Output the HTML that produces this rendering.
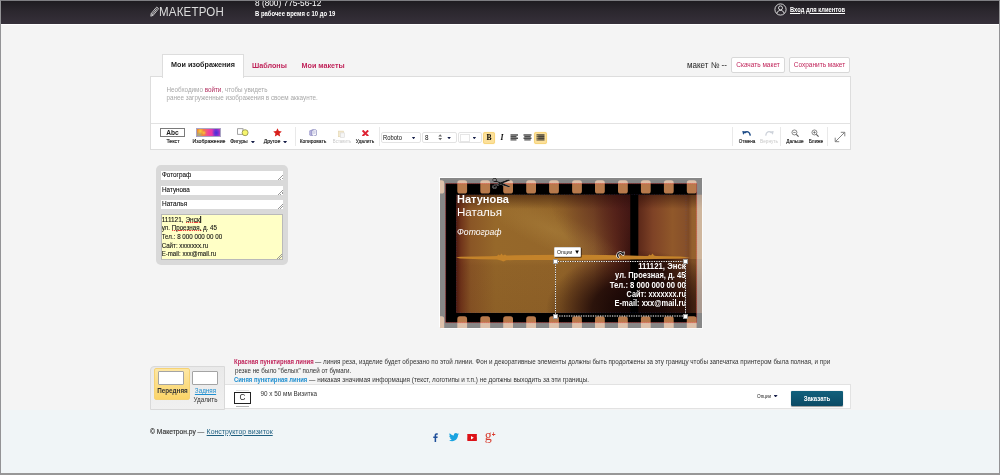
<!DOCTYPE html>
<html lang="ru">
<head>
<meta charset="utf-8">
<title>Макетрон — Конструктор визиток</title>
<style>
*{box-sizing:border-box;margin:0;padding:0}
html,body{width:1000px;height:475px;overflow:hidden;background:#f4f4f4;font-family:"Liberation Sans",sans-serif;color:#333}
.abs{position:absolute}
#frame{position:absolute;left:0;top:0;width:1000px;height:475px;border:1px solid #939396;border-top-color:#7e7e82;border-bottom:2px solid #979797;pointer-events:none;z-index:50}
/* header */
#hdr{position:absolute;left:0;top:0;width:1000px;height:24px;background:linear-gradient(#1d1b1f,#2b272e 45%,#36303a);}
#hdrline{position:absolute;left:0;top:24px;width:1000px;height:1px;background:#fff}
#logo{position:absolute;left:158.5px;top:3.6px;font-size:13.5px;line-height:16px;color:#dcdcdc;letter-spacing:.2px;font-weight:400;transform-origin:0 50%;transform:scaleX(.855)}
#phone{position:absolute;left:254.5px;top:-3.4px;font-size:9.8px;line-height:12px;color:#fff;white-space:nowrap;transform-origin:0 50%;transform:scaleX(.845)}
#hours{position:absolute;left:254.5px;top:9px;font-size:6.5px;line-height:9px;color:#fff;font-weight:bold;white-space:nowrap;transform-origin:0 50%;transform:scaleX(.91)}
#login{position:absolute;left:790px;top:4.700px;text-decoration-thickness:.6px;text-underline-offset:.8px;font-size:6.5px;line-height:10px;color:#fff;font-weight:bold;text-decoration:underline;white-space:nowrap;transform-origin:0 50%;transform:scaleX(.89)}
/* tabs */
#tabA{position:absolute;left:162px;top:54px;width:82px;height:24px;background:#fff;border:1px solid #ddd;border-bottom:none;font-size:7.200px;font-weight:bold;color:#222;text-align:center;line-height:20.600px;z-index:3}
.tab{position:absolute;top:53.500px;height:23px;font-size:7.200px;font-weight:bold;color:#c0245a;line-height:23px;white-space:nowrap}
#panel{position:absolute;left:150px;top:76px;width:701px;height:74px;background:#fff;border:1px solid #ddd;z-index:2}
#tbsep{position:absolute;left:0;top:46px;width:100%;height:1px;background:#e2e2e2}
.note{position:absolute;left:15.5px;font-size:6.3px;line-height:9px;color:#a8a8a8;white-space:nowrap}
.note b{color:#b02a5c;font-weight:normal}
#mk{position:absolute;left:686.700px;top:59px;transform-origin:0 50%;transform:scaleX(.945);font-size:8.5px;line-height:12px;color:#222;white-space:nowrap}
.btn{position:absolute;top:57.300px;height:15.400px;background:#fff;border:1px solid #d8d8d8;border-radius:2px;font-size:6.5px;line-height:13.400px;color:#c0245a;text-align:center;white-space:nowrap}

/* toolbar */
.tl{position:absolute;font-size:5.6px;line-height:7px;color:#1a1a1a;-webkit-text-stroke:.15px #1a1a1a;white-space:nowrap;text-align:center;transform:translateX(-50%) scaleX(var(--k,1));z-index:4}
.tl.dis{color:#c8c8c8;-webkit-text-stroke:0}
.vsep{position:absolute;top:127px;width:1px;height:19px;background:#e9e9e9;z-index:4}
.ico{position:absolute;z-index:4}
.sel{position:absolute;top:131.700px;height:11.800px;background:#fff;border:1px solid #e3e3e3;border-radius:2px;z-index:4;font-size:6.300px;line-height:9.600px;color:#111;padding-left:2px}
.sel .arr{width:3.600px;height:2.300px;margin-top:.3px}
.arr{position:absolute;width:4.800px;height:2.900px;background:#161e48;clip-path:polygon(0 0,100% 0,50% 100%)}
.tbtn{position:absolute;top:132px;height:12px;z-index:4;border-radius:2px}
.tbtn.on{background:#fce09a;border:1px solid #f7d57c;box-shadow:0 0 1px #f9db8c}
/* left panel */
#lp{position:absolute;left:156px;top:165px;width:132px;height:100px;background:#d9d9d9;border-radius:5px}
.inp{position:absolute;left:5px;width:122px;height:9px;background:#fff;-webkit-text-stroke:.1px #111;font-size:6.8px;line-height:8px;padding-left:1px;color:#111;white-space:nowrap;overflow:hidden}
.grip{position:absolute;right:0;bottom:0;width:5px;height:5px;background:linear-gradient(135deg,transparent 45%,#999 45%,#999 55%,transparent 55%,transparent 70%,#999 70%,#999 80%,transparent 80%)}
#ta{-webkit-text-stroke:.1px #111;position:absolute;left:5px;top:49px;width:122px;height:46px;background:#ffffc6;border:1px solid #b9b9b9;font-size:6.8px;line-height:8.6px;padding:.8px 0 0 0;text-indent:-.4px;color:#111;white-space:nowrap;overflow:hidden}
.sq{background-image:repeating-linear-gradient(90deg,#e8413a 0,#e8413a 1.200px,rgba(232,65,58,.2) 1.200px,rgba(232,65,58,.2) 2px);background-size:100% 1px;background-position:0 100%;background-repeat:no-repeat}
.sx{display:inline-block;transform-origin:0 50%;transform:scaleX(var(--k,1))}

/* card */
#card{position:absolute;left:440px;top:178px;width:262px;height:150px;background:#000;overflow:hidden;box-shadow:-1px -1px 0 0 rgba(255,255,255,.9),1px 1px 0 0 rgba(255,255,255,.6)}
#card svg{position:absolute;left:0;top:0}
.ct{position:absolute;color:#fff;white-space:nowrap;transform-origin:0 50%}
.cr{position:absolute;right:16.300px;color:#fff;white-space:nowrap;font-weight:bold;font-size:8.300px;line-height:9px;transform-origin:100% 50%}
#selbox{position:absolute;left:115.500px;top:83.400px;width:130px;height:54.600px;border:1px dotted #fff;outline:1px dotted rgba(0,0,0,.55);outline-offset:-1px}
.hd{position:absolute;width:5px;height:5px;background:#fff;border:.5px solid #999}
#opt{position:absolute;left:113.800px;top:68.700px;width:27.300px;height:10.600px;background:#fff;border:1px solid #d8d8d8;border-radius:1px;font-size:5.700px;line-height:8.400px;color:#222;padding-left:1.800px;white-space:nowrap;box-shadow:.8px .8px 0 rgba(20,10,5,.6)}

/* bottom */
.lg{position:absolute;left:233.5px;font-size:6.5px;line-height:9px;color:#333;white-space:nowrap;transform-origin:0 50%}
.lg b.r{color:#c0245a}.lg b.b{color:#1f8fd0}
#ptabs{position:absolute;left:150px;top:365.500px;width:74.500px;height:44px;background:linear-gradient(#e9e9e9,#f0f0f0);border:1px solid #d9d9d9;border-radius:4px 0 0 0}
#pt1{position:absolute;left:2.500px;top:1.400px;width:36.500px;height:32px;background:linear-gradient(#fde7a4,#fbd468);border:1px solid #f6d274;border-radius:2px}
.pg{position:absolute;width:26px;height:14px;background:#fff;border:1px solid #a4a4a4;border-radius:1px}
#bar{position:absolute;left:224.500px;top:384.200px;width:626px;height:25.300px;background:#fff;border:1px solid #e2e2e2;border-left:none}
#foot{position:absolute;left:0;top:410px;width:1000px;height:65px;background:#f0f5f7}
#order{position:absolute;left:791px;top:391px;width:52px;height:14.5px;background:linear-gradient(#12607c,#0c4a64);border-radius:1px;color:#fff;font-weight:bold;font-size:6.800px;line-height:16.400px;text-align:center;box-shadow:0 .5px 1px rgba(0,0,0,.4)}
</style>
</head>
<body>
<div id="wrap" style="position:absolute;left:0;top:0;width:1000px;height:475px;will-change:transform;overflow:hidden">
<div id="hdr"></div><div id="hdrline"></div>
<svg class="abs" style="left:150px;top:5.5px" width="9" height="11" viewBox="0 0 9 11"><g fill="none" stroke="#e9e9e9" stroke-width=".8" stroke-linejoin="round"><path d="M1.2 7.6L6.1 1.6a1 1 0 0 1 1.4-.1l.5.4a1 1 0 0 1 .1 1.4L3.2 9.3 0.8 10.2z"/><path d="M2.3 8.4L7.2 2.4M1.2 7.6l2 1.7"/></g></svg>
<div id="logo">МАКЕТРОН</div>
<div id="phone">8 (800) 775-56-12</div>
<div id="hours">В рабочее время с 10 до 19</div>
<svg class="abs" style="left:774px;top:3px" width="13" height="13" viewBox="0 0 13 13"><circle cx="6.5" cy="6.5" r="5.6" fill="none" stroke="#fff" stroke-width=".8"/><circle cx="6.5" cy="4.9" r="2" fill="none" stroke="#fff" stroke-width=".8"/><path d="M2.9 10.4c.5-2.2 1.9-3 3.6-3s3.100.8 3.600 3" fill="none" stroke="#fff" stroke-width=".8"/></svg>
<div id="login">Вход для клиентов</div>

<div id="tabA">Мои изображения</div>
<div class="tab" style="left:252px">Шаблоны</div>
<div class="tab" style="left:301.500px">Мои макеты</div>
<div id="mk">макет № --</div>
<div class="btn" style="left:731px;width:54px">Скачать макет</div>
<div class="btn" style="left:789px;width:61px">Сохранить макет</div>

<div id="panel">
  <div class="note" style="top:7.500px">Необходимо <b>войти</b>, чтобы увидеть</div>
  <div class="note" style="top:16px">ранее загруженные изображения в своем аккаунте.</div>
  <div id="tbsep"></div>
</div>


<!-- toolbar -->
<div class="ico" style="left:160px;top:128.200px;width:25px;height:8.400px;border:1px solid #7a7a7a;background:#fff;font-size:6.600px;line-height:8px;overflow:hidden;font-weight:bold;text-align:center;color:#222">Abc</div>
<div class="tl" style="left:172.9px;top:138px;--k:0.94">Текст</div>
<div class="ico" style="left:196.300px;top:128.400px;width:25px;height:8.300px;border:1px solid #aaa3c4;background:radial-gradient(circle at 14% 30%,#f8d23c 0,rgba(248,210,60,0) 16%),radial-gradient(circle at 30% 55%,#f8c838 0,rgba(248,200,56,0) 14%),radial-gradient(circle at 8% 85%,#9cb08c 0,rgba(156,176,140,0) 18%),radial-gradient(circle at 84% 55%,#4a2cd8 0,rgba(74,44,216,0) 22%),radial-gradient(circle at 58% 60%,#f23a9c 0,rgba(242,58,156,0) 30%),linear-gradient(90deg,#ec7c34,#f08a34 22%,#f2508a 46%,#e63ab0 62%,#7a38d4 82%,#c436c4)"></div>
<div class="tl" style="left:209px;top:138px;--k:0.936">Изображение</div>
<svg class="ico" style="left:236px;top:127px" width="14" height="10" viewBox="0 0 14 10"><rect x="1.600" y="1.700" width="5.400" height="5.600" fill="#fff" stroke="#8c8c8c" stroke-width=".8"/><circle cx="9.100" cy="5.700" r="3" fill="#f6f56c" stroke="#86864a" stroke-width=".75"/></svg>
<div class="tl" style="left:239.3px;top:138px;--k:0.907">Фигуры</div><div class="arr" style="left:250.5px;top:140.5px;z-index:4"></div>
<svg class="ico" style="left:273px;top:128px" width="9" height="9" viewBox="0 0 10 10"><path d="M5 .3l1.45 3.1 3.3.4-2.45 2.3.65 3.35L5 7.8 2.05 9.45l.65-3.35L.25 3.8l3.3-.4z" fill="#d8201c"/></svg>
<div class="tl" style="left:272.1px;top:138px;--k:0.942">Другое</div><div class="arr" style="left:282.7px;top:140.5px;z-index:4"></div>
<div class="vsep" style="left:295.300px"></div>
<svg class="ico" style="left:308.600px;top:128.800px" width="8.200" height="7.600" viewBox="0 0 10 9.300"><path d="M.8 2.200l4.200-1.500 1.500 1v5.300L2.300 8.500.8 7.500z" fill="#b8b4e0" stroke="#7a78b8" stroke-width=".6"/><path d="M3.500 1.800L7.600.6l1.700 1.200v5.700L5.200 8.800 3.500 7.600z" fill="#fdfdff" stroke="#6a6aa8" stroke-width=".7"/><path d="M4.600 3.400l3.600-1M4.600 4.700l3.600-1M4.600 6l3.600-1" stroke="#9a9ac8" stroke-width=".5"/></svg>
<div class="tl" style="left:312.8px;top:138px;--k:0.88">Копировать</div>
<svg class="ico" style="left:337.5px;top:129.5px" width="7.2" height="8" viewBox="0 0 9 10"><rect x=".8" y="1.4" width="6" height="7" fill="#f4ead0" stroke="#e4d6b0" stroke-width=".8"/><rect x="3" y="3.6" width="5" height="5.6" fill="#f6f6f6" stroke="#dcdcdc" stroke-width=".8"/></svg>
<div class="tl dis" style="left:341.6px;top:138px;--k:0.77">Вставить</div>
<svg class="ico" style="left:361.800px;top:129.600px" width="6.800" height="6.600" viewBox="0 0 9 9"><path d="M1.600 1.600l5.800 5.800M7.400 1.600L1.600 7.400" stroke="#de2232" stroke-width="2.700" stroke-linecap="square"/></svg>
<div class="tl" style="left:364.6px;top:138px;--k:0.855">Удалить</div>
<div class="vsep" style="left:379px"></div>
<div class="sel" style="left:381px;width:40px"><span style="display:inline-block;transform-origin:0 50%;transform:scaleX(.93);margin-left:-1px">Roboto</span><div class="arr" style="left:29.800px;top:4px"></div></div>
<div class="sel" style="left:422px;width:35px">8<svg style="position:absolute;left:15.300px;top:1.600px" width="4.400" height="6.600" viewBox="0 0 4.400 6.600"><path d="M.3 2.600L2.200.3 4.100 2.600zM.3 4l1.900 2.300L4.100 4z" fill="#6a6a6a"/></svg><div class="arr" style="left:24.300px;top:4px"></div></div>
<div class="sel" style="left:458px;width:24px"><div style="position:absolute;left:1px;top:1px;width:10px;height:8px;border:1px solid #e6e6e6;background:#fff"></div><div class="arr" style="left:13.500px;top:4px"></div></div>
<div class="tbtn on" style="left:483px;width:12px;font-family:'Liberation Serif',serif;font-weight:bold;font-size:7.600px;line-height:10px;text-align:center;color:#000">B</div>
<div class="tbtn" style="left:497px;width:10px;font-family:'Liberation Serif',serif;font-weight:bold;font-style:italic;font-size:7.600px;line-height:11.500px;text-align:center;color:#000">I</div>
<svg class="ico" style="left:510px;top:134px" width="9" height="8" viewBox="0 0 9 8"><path d="M.5 1h7.500M.5 2.600h6M.5 4.200h7.500M.5 5.800h6" stroke="#505050" stroke-width="1.350"/></svg>
<svg class="ico" style="left:523px;top:134px" width="9" height="8" viewBox="0 0 9 8"><path d="M.5 1h8M1.300 2.600h6.400M.5 4.200h8M1.300 5.800h6.400" stroke="#505050" stroke-width="1.350"/></svg>
<div class="tbtn on" style="left:534px;width:13px"></div>
<svg class="ico" style="left:536px;top:134px;z-index:5" width="9" height="8" viewBox="0 0 9 8"><path d="M.5 1h8M.5 2.600h8M.5 4.200h8M.5 5.800h8" stroke="#4a4438" stroke-width="1.350"/><path d="M.3 1.800h2M.3 3.400h2M.3 5h2" stroke="#fcdd8a" stroke-width=".5"/></svg>
<div class="vsep" style="left:732px"></div>
<svg class="ico" style="left:742.300px;top:129.800px" width="9" height="6" viewBox="0 0 9 6"><path d="M2.600 2.900C4.600.8 7.800 1.400 8.300 5.600" fill="none" stroke="#1c4a86" stroke-width="1.500"/><path d="M.3.900l3.700.5L1.100 4.700z" fill="#1c4a86"/></svg>
<div class="tl" style="left:746.5px;top:138px;--k:0.82">Отмена</div>
<svg class="ico" style="left:764.800px;top:129.800px" width="9" height="6" viewBox="0 0 9 6"><path d="M6.400 2.900C4.400.8 1.200 1.400.7 5.600" fill="none" stroke="#cdd2da" stroke-width="1.300"/><path d="M8.700.9L5 1.400l2.900 3.300z" fill="#cdd2da"/></svg>
<div class="tl dis" style="left:768.5px;top:138px;--k:0.84">Вернуть</div>
<div class="vsep" style="left:780px"></div>
<svg class="ico" style="left:790.6px;top:128.6px" width="8.6" height="8.6" viewBox="0 0 10 10"><circle cx="4" cy="4" r="2.9" fill="#fff" stroke="#555" stroke-width=".8"/><path d="M6.2 6.2l2.6 2.6" stroke="#555" stroke-width="1.3"/><path d="M2.6 4h2.8" stroke="#555" stroke-width=".8"/></svg>
<div class="tl" style="left:795px;top:138px;--k:0.846">Дальше</div>
<svg class="ico" style="left:811.2px;top:128.6px" width="8.6" height="8.6" viewBox="0 0 10 10"><circle cx="4" cy="4" r="2.9" fill="#fff" stroke="#555" stroke-width=".8"/><path d="M6.2 6.2l2.6 2.6" stroke="#555" stroke-width="1.3"/><path d="M2.6 4h2.8M4 2.6v2.8" stroke="#555" stroke-width=".8"/></svg>
<div class="tl" style="left:815.6px;top:138px;--k:0.86">Ближе</div>
<div class="vsep" style="left:827px"></div>
<svg class="ico" style="left:834px;top:131px" width="12" height="12" viewBox="0 0 12 12"><path d="M1.5 10.5l9-9M6.8 1.3h4v4M5.2 10.7h-4v-4" fill="none" stroke="#777" stroke-width=".9"/></svg>

<!-- left panel -->
<div id="lp">
  <div class="inp" style="top:6px"><span class="sx" style="--k:.935">Фотограф</span><div class="grip"></div></div>
  <div class="inp" style="top:20.500px"><span class="sx" style="--k:.93">Натунова</span><div class="grip"></div></div>
  <div class="inp" style="top:35px"><span class="sx" style="--k:.95">Наталья</span><div class="grip"></div></div>
  <div id="ta"><span class="sx" style="--k:.955">111121, <span class="sq">Энск</span><span style="display:inline-block;width:.7px;height:7px;background:#000;vertical-align:-1px"></span></span><br><span class="sx" style="--k:.916">ул. <span class="sq">Проезная,</span> д. 45</span><br><span class="sx" style="--k:.915">Тел.: 8 000 000 00 00</span><br><span class="sx" style="--k:.91">Сайт: xxxxxxx.ru</span><br><span class="sx" style="--k:.9">E-mail: xxx@mail.ru</span><div class="grip"></div></div>
</div>

<!-- card -->
<div id="card">
<svg width="262" height="150" viewBox="0 0 262 150">
<defs>
<linearGradient id="gx" gradientUnits="userSpaceOnUse" x1="16" x2="262" y1="0" y2="0">
<stop offset="0" stop-color="#4c1a10"/><stop offset=".02" stop-color="#70341a"/><stop offset=".06" stop-color="#8a5626"/><stop offset=".16" stop-color="#96682a"/><stop offset=".44" stop-color="#94662a"/><stop offset=".56" stop-color="#86562a"/><stop offset=".65" stop-color="#5c281a"/><stop offset=".708" stop-color="#36120e"/>
<stop offset=".745" stop-color="#5e2a1a"/><stop offset=".8" stop-color="#7e4226"/><stop offset=".88" stop-color="#90582a"/><stop offset=".93" stop-color="#87502a"/><stop offset=".945" stop-color="#7e4a26"/><stop offset=".96" stop-color="#94602c"/><stop offset="1" stop-color="#98642e"/>
</linearGradient>
<radialGradient id="gl" gradientUnits="userSpaceOnUse" cx="0" cy="0" r="1" gradientTransform="translate(112 52) rotate(24) scale(78 20)"><stop offset="0" stop-color="#b48c44" stop-opacity=".38"/><stop offset="1" stop-color="#b48c44" stop-opacity="0"/></radialGradient>
<radialGradient id="gm" gradientUnits="userSpaceOnUse" cx="0" cy="0" r="1" gradientTransform="translate(192 10) scale(84 80)"><stop offset="0" stop-color="#45161a" stop-opacity=".72"/><stop offset=".45" stop-color="#4e1c18" stop-opacity=".5"/><stop offset="1" stop-color="#4a1a18" stop-opacity="0"/></radialGradient>
<radialGradient id="gd" gradientUnits="userSpaceOnUse" cx="0" cy="0" r="1" gradientTransform="translate(198 132) scale(92 60)"><stop offset="0" stop-color="#100403" stop-opacity=".97"/><stop offset=".5" stop-color="#1c0806" stop-opacity=".84"/><stop offset=".78" stop-color="#2a0e08" stop-opacity=".42"/><stop offset="1" stop-color="#2a0e08" stop-opacity="0"/></radialGradient>
<linearGradient id="gt" x1="0" x2="0" y1="0" y2="1"><stop offset="0" stop-color="#2a0c06" stop-opacity=".5"/><stop offset=".12" stop-color="#2a0c06" stop-opacity="0"/><stop offset=".56" stop-color="#3a1608" stop-opacity="0"/><stop offset=".6" stop-color="#3a1608" stop-opacity=".06"/><stop offset="1" stop-color="#3a1608" stop-opacity=".1"/></linearGradient>
<linearGradient id="gr" gradientUnits="userSpaceOnUse" x1="198" x2="246.500" y1="0" y2="0"><stop offset="0" stop-color="#160604" stop-opacity=".88"/><stop offset=".55" stop-color="#1c0806" stop-opacity=".76"/><stop offset=".8" stop-color="#2a0e08" stop-opacity=".55"/><stop offset="1" stop-color="#2a0e08" stop-opacity=".35"/></linearGradient>
</defs>
<rect x="16" y="16.800" width="246" height="118.200" fill="url(#gx)"/>
<rect x="16" y="16.800" width="246" height="118.200" fill="url(#gl)"/>
<rect x="16" y="16.800" width="174.500" height="118.200" fill="url(#gm)"/>
<rect x="16" y="16.800" width="246" height="118.200" fill="url(#gt)"/>
<rect x="16" y="16.800" width="246" height="118.200" fill="url(#gd)"/>
<rect x="198" y="81" width="48.500" height="54" fill="url(#gr)"/><rect x="246.500" y="81" width="15.500" height="54" fill="#2a0e08" opacity=".22"/><rect x="190.300" y="16.500" width="8" height="119" fill="#000"/>
<path d="M16 79.6 L20 78.7 L50 78.3 L57 78 L58.5 76.6 L60 77.6 L61.5 75.4 L63 77.4 L65 76.4 L66.5 77.6 L75 77.2 L120 76.8 L165 76.9 L190 77.5 L205 78.1 L208 78 L209.5 76.4 L211 77.6 L212.5 75.6 L214 77.4 L216 78 L240 78.6 L250 79.4 L240 80.6 L215 81 L205 81.2 L175 81.8 L120 82 L75 82 L66 82.2 L63.5 83.6 L61 82.4 L57 81.6 L40 81.2 L20 80.4z" fill="#c4832a"/>
<g fill="#b87a4c"><rect x="-5.6" y="2.3" width="9.8" height="13.3" rx="2.6"/><rect x="-5.6" y="138.300" width="9.8" height="16" rx="2.6"/><rect x="17.3" y="2.3" width="9.8" height="13.3" rx="2.6"/><rect x="17.3" y="138.300" width="9.8" height="16" rx="2.6"/><rect x="40.3" y="2.3" width="9.8" height="13.3" rx="2.6"/><rect x="40.3" y="138.300" width="9.8" height="16" rx="2.6"/><rect x="63.2" y="2.3" width="9.8" height="13.3" rx="2.6"/><rect x="63.2" y="138.300" width="9.8" height="16" rx="2.6"/><rect x="86.2" y="2.3" width="9.8" height="13.3" rx="2.6"/><rect x="86.2" y="138.300" width="9.8" height="16" rx="2.6"/><rect x="109.1" y="2.3" width="9.8" height="13.3" rx="2.6"/><rect x="109.1" y="138.300" width="9.8" height="16" rx="2.6"/><rect x="132.1" y="2.3" width="9.8" height="13.3" rx="2.6"/><rect x="132.1" y="138.300" width="9.8" height="16" rx="2.6"/><rect x="155.0" y="2.3" width="9.8" height="13.3" rx="2.6"/><rect x="155.0" y="138.300" width="9.8" height="16" rx="2.6"/><rect x="178.0" y="2.3" width="9.8" height="13.3" rx="2.6"/><rect x="178.0" y="138.300" width="9.8" height="16" rx="2.6"/><rect x="200.9" y="2.3" width="9.8" height="13.3" rx="2.6"/><rect x="200.9" y="138.300" width="9.8" height="16" rx="2.6"/><rect x="223.9" y="2.3" width="9.8" height="13.3" rx="2.6"/><rect x="223.9" y="138.300" width="9.8" height="16" rx="2.6"/><rect x="246.8" y="2.3" width="9.8" height="13.3" rx="2.6"/><rect x="246.8" y="138.300" width="9.8" height="16" rx="2.6"/></g>
<path fill-rule="evenodd" fill="rgba(255,255,255,.53)" d="M0 0h262v150H0zM5.600 5.600v139h251v-139z"/>
<rect x="5.600" y="5.600" width="251" height="139" fill="none" stroke="#f02a2a" stroke-opacity=".8" stroke-width=".8" stroke-dasharray="1 1"/>
<rect x="16.5" y="16.5" width="229.500" height="118" fill="none" stroke="#3a5ae0" stroke-width=".5" stroke-dasharray="1 1.500" opacity=".3"/>
</svg>
<div class="ct" style="left:17px;top:15.300px;font-size:11.1px;line-height:13px;font-weight:bold;transform:scaleX(.99)">Натунова</div>
<div class="ct" style="left:17px;top:27.8px;font-size:11.1px;line-height:13px;transform:scaleX(1.04)">Наталья</div>
<div class="ct" style="left:17px;top:47.5px;font-size:9.8px;line-height:12px;font-style:italic;transform:scaleX(.88)">Фотограф</div>
<div class="cr" style="top:84.0px;transform:scaleX(0.937)">111121, Энск</div>
<div class="cr" style="top:93.3px;transform:scaleX(0.908)">ул. Проезная, д. 45</div>
<div class="cr" style="top:102.5px;transform:scaleX(0.93)">Тел.: 8 000 000 00 00</div>
<div class="cr" style="top:111.8px;transform:scaleX(0.873)">Сайт: xxxxxxx.ru</div>
<div class="cr" style="top:121.1px;transform:scaleX(0.904)">E-mail: xxx@mail.ru</div>
<svg style="left:112px;top:80px;overflow:visible" width="140" height="62" viewBox="0 0 140 62"><rect x="3.500" y="3.500" width="130" height="54.500" fill="none" stroke="#222" stroke-opacity=".55" stroke-width="1"/><rect x="3.500" y="3.500" width="130" height="54.500" fill="none" stroke="#fff" stroke-width="1" stroke-dasharray="1.200 1.200"/></svg>
<div class="hd" style="left:113px;top:81px"></div><div class="hd" style="left:243px;top:81px"></div>
<div class="hd" style="left:113px;top:135.500px"></div><div class="hd" style="left:243px;top:135.500px"></div>
<div id="opt"><span style="display:inline-block;transform-origin:0 50%;transform:scaleX(.9)">Опции</span><span style="font-size:6.200px;color:#000;margin-left:.2px">▼</span></div>
<svg style="left:176px;top:72px" width="9" height="9" viewBox="0 0 9 9"><g fill="none" stroke-linecap="round" stroke-linejoin="round"><path d="M2.300 7.200A2.700 2.700 0 1 1 6.700 4.200" stroke="#fff" stroke-width="2.600"/><path d="M5.300 3.300l2.300 1.700 .5-2.800z" fill="#fff" stroke="#fff" stroke-width="1.400"/><path d="M2.300 7.200A2.700 2.700 0 1 1 6.700 4.200" stroke="#1a1a1a" stroke-width="1.300"/><path d="M5.300 3.300l2.300 1.700 .5-2.800z" fill="#1a1a1a" stroke="#1a1a1a" stroke-width=".3"/></g></svg>
</div>
<div class="abs" style="left:491.300px;top:174.600px;width:18px;text-align:center;font-family:'DejaVu Sans',sans-serif;font-size:24px;line-height:18px;color:#1a1a1a;z-index:6;text-shadow:0 0 .5px #fff">✂</div>


<!-- bottom -->
<div id="foot"></div>
<div class="lg" style="top:356.700px;transform:scaleX(.915)"><b class="r">Красная пунктирная линия</b></div><div class="lg" style="top:356.700px;left:315.300px;transform:scaleX(.9635)">— линия реза, изделие будет обрезано по этой линии. Фон и декоративные элементы должны быть продолжены за эту границу чтобы запечатка принтером была полная, и при</div>
<div class="lg" style="top:365.900px;left:234.500px;transform:scaleX(.96)">резке не было "белых" полей от бумаги.</div>
<div class="lg" style="top:374.500px;transform:scaleX(.906)"><b class="b">Синяя пунктирная линия</b></div><div class="lg" style="top:374.500px;left:309.200px;transform:scaleX(.9785)">— никакая значимая информация (текст, логотипы и т.п.) не должны выходить за эти границы.</div>
<div id="ptabs">
  <div id="pt1"></div>
  <div class="pg" style="left:7px;top:4.200px"></div>
  <div class="pg" style="left:41.200px;top:4.200px"></div>
  <div class="abs" style="left:3px;top:20.500px;width:37px;text-align:center;font-size:6.3px;line-height:8px;font-weight:bold;color:#333">Передняя</div>
  <div class="abs" style="left:38px;top:20.500px;width:33px;text-align:center;font-size:6.3px;line-height:8px;color:#1f8fd0;text-decoration:underline">Задняя</div>
  <div class="abs" style="left:38px;top:29.600px;width:33px;text-align:center;font-size:6.300px;line-height:8px;color:#333">Удалить</div>
</div>
<div id="bar">
  <div class="abs" style="left:9.500px;top:6.800px;width:17px;height:12px;border:1px solid #222;background:#fff;font-size:8.200px;line-height:10.800px;font-weight:normal;text-align:center;color:#222">C</div>
  <div class="abs" style="left:11.500px;top:20.600px;width:13px;height:1px;background:#b4b4b4"></div><div class="abs" style="left:11.500px;top:4.800px;width:13px;height:1px;background:#e2e2e2"></div>
  <div class="abs" style="left:36px;top:4.600px;font-size:6.350px;line-height:8px;color:#333;white-space:nowrap">90 x 50 мм Визитка</div>
  <div class="abs" style="left:532.600px;top:7.800px;font-size:5.600px;line-height:7px;color:#222;white-space:nowrap;transform-origin:0 50%;transform:scaleX(.84)">Опции</div>
  <div class="arr" style="left:549.100px;top:9.700px;width:4px;height:2.600px"></div>
</div>
<div id="order"><span style="display:inline-block;transform:scaleX(.89)">Заказать</span></div>
<div class="abs" style="left:150px;top:426.500px;font-size:6.95px;line-height:9px;color:#333;white-space:nowrap"><span style="-webkit-text-stroke:.15px #333;display:inline-block;transform-origin:0 50%;transform:scaleX(.965)">© Макетрон.ру —</span> <span style="color:#1f5f80;text-decoration:underline;text-decoration-thickness:.6px;margin-left:-1.600px">Конструктор визиток</span></div>
<!-- social -->
<svg class="abs" style="left:432.300px;top:432.600px" width="6.300" height="9" viewBox="0 0 7 10"><path d="M4.600 10V5.600h1.500l.25-1.750H4.600V2.800c0-.5.150-.85.900-.85h.9V.4C6.200.35 5.700.3 5.100.3 3.800.3 2.900 1.100 2.900 2.550v1.300H1.400V5.600h1.500V10z" fill="#1f4f9a"/></svg>
<svg class="abs" style="left:448.800px;top:433.200px" width="10" height="8.500" viewBox="0 0 20 17"><path d="M20 2c-.7.300-1.500.6-2.400.7.900-.5 1.500-1.300 1.800-2.300-.8.500-1.700.8-2.600 1C16 .500 15 0 13.800 0c-2.300 0-4.100 1.800-4.100 4.100 0 .3 0 .6.100.9C6.400 4.800 3.400 3.200 1.400.700 1 1.300.800 2 .800 2.800c0 1.400.7 2.700 1.800 3.400-.7 0-1.300-.2-1.900-.5v.1c0 2 1.400 3.600 3.300 4-.3.100-.7.100-1.100.100-.3 0-.5 0-.8-.1.500 1.600 2 2.800 3.800 2.900-1.400 1.100-3.200 1.800-5.100 1.800-.3 0-.7 0-1-.1C1.800 15.600 4 16.300 6.300 16.300c7.500 0 11.700-6.300 11.700-11.700v-.5c.8-.6 1.500-1.300 2-2.100z" fill="#1aa3e0"/></svg>
<svg class="abs" style="left:466.800px;top:433.700px" width="10.200" height="7.600" viewBox="0 0 20.400 15.200"><path d="M1.200 0h18l1.200 1.300-1.200 1.300 1.200 1.200-1.200 1.300 1.200 1.300-1.200 1.200 1.200 1.300-1.200 1.300 1.200 1.200-1.200 1.300 1.200 1.300-1.200 1.200h-18L0 13.900l1.200-1.200L0 11.400l1.200-1.300L0 8.900l1.200-1.300L0 6.300l1.200-1.200L0 3.800l1.200-1.300L0 1.300z" fill="#dc1218"/><path d="M8 4.200l5.600 3.400L8 11z" fill="#fff"/></svg>
<div class="abs" style="left:484.800px;top:427.500px;font-family:'Liberation Serif',serif;font-size:14px;line-height:16px;color:#d83a2c;white-space:nowrap">g</div><div class="abs" style="left:491.700px;top:430.800px;font-size:6.500px;line-height:8px;font-weight:bold;color:#d83a2c">+</div>

<div id="frame"></div>
</div>
</body>
</html>
